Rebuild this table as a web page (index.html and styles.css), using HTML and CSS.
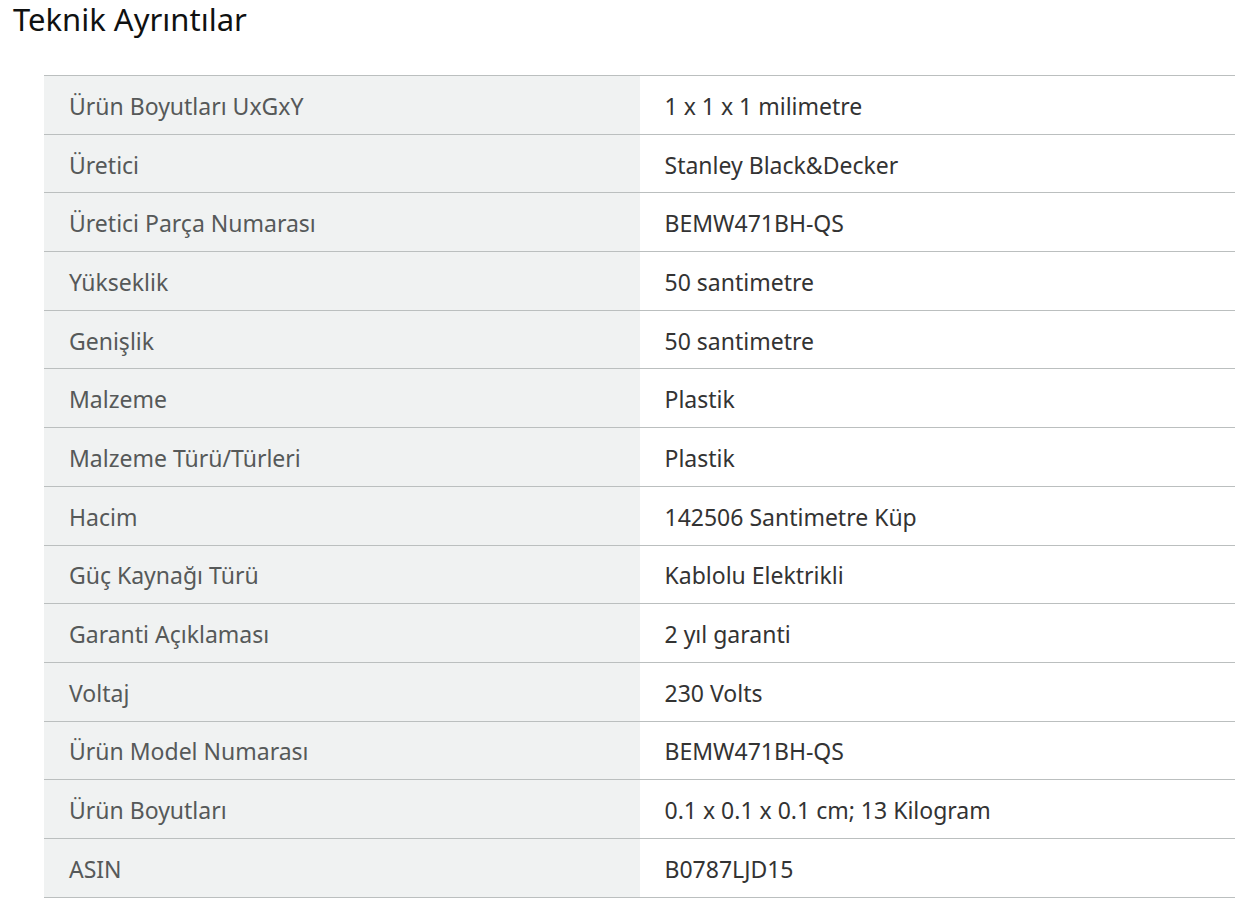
FILE: index.html
```html
<!DOCTYPE html>
<html lang="tr">
<head>
<meta charset="utf-8">
<title>Teknik Ayrıntılar</title>
<link rel="stylesheet" href="styles.css">
</head>
<body>
<div class="page">
  <h2 class="title">Teknik Ayrıntılar</h2>
  <div class="specs">
    <div class="row"><div class="label">Ürün Boyutları UxGxY</div><div class="value">1 x 1 x 1 milimetre</div></div>
    <div class="row"><div class="label">Üretici</div><div class="value">Stanley Black&amp;Decker</div></div>
    <div class="row"><div class="label">Üretici Parça Numarası</div><div class="value">BEMW471BH-QS</div></div>
    <div class="row"><div class="label">Yükseklik</div><div class="value">50 santimetre</div></div>
    <div class="row"><div class="label">Genişlik</div><div class="value">50 santimetre</div></div>
    <div class="row"><div class="label">Malzeme</div><div class="value">Plastik</div></div>
    <div class="row"><div class="label">Malzeme Türü/Türleri</div><div class="value">Plastik</div></div>
    <div class="row"><div class="label">Hacim</div><div class="value">142506 Santimetre Küp</div></div>
    <div class="row"><div class="label">Güç Kaynağı Türü</div><div class="value">Kablolu Elektrikli</div></div>
    <div class="row"><div class="label">Garanti Açıklaması</div><div class="value">2 yıl garanti</div></div>
    <div class="row"><div class="label">Voltaj</div><div class="value">230 Volts</div></div>
    <div class="row"><div class="label">Ürün Model Numarası</div><div class="value">BEMW471BH-QS</div></div>
    <div class="row"><div class="label">Ürün Boyutları</div><div class="value">0.1 x 0.1 x 0.1 cm; 13 Kilogram</div></div>
    <div class="row"><div class="label">ASIN</div><div class="value">B0787LJD15</div></div>
  </div>
</div>
</body>
</html>
```
FILE: styles.css
```css
html, body {
  margin: 0;
  padding: 0;
  background: #ffffff;
}
body {
  font-family: "Noto Sans", "Open Sans", sans-serif;
  color: #0f1111;
}
.page {
  display: flex;
  flex-direction: column;
}
.title {
  margin: 0;
  padding: 0 0 0 13px;
  font-size: 31px;
  font-weight: 400;
  line-height: 38px;
  color: #0f1111;
  height: 75px;
}
.specs {
  margin: 0 6px 0 44px;
  border-top: 1px solid #bbbfbf;
  display: flex;
  flex-direction: column;
}
.row {
  display: grid;
  grid-template-columns: 1fr 1fr;
  height: 58.7px;
  box-sizing: border-box;
  border-bottom: 1px solid #bbbfbf;
  font-size: 23px;
}
.label, .value {
  display: flex;
  align-items: center;
  padding: 2px 0 0 25px;
}
.label {
  background: #f0f2f2;
  color: #565959;
}
.value {
  color: #333333;
}
```
